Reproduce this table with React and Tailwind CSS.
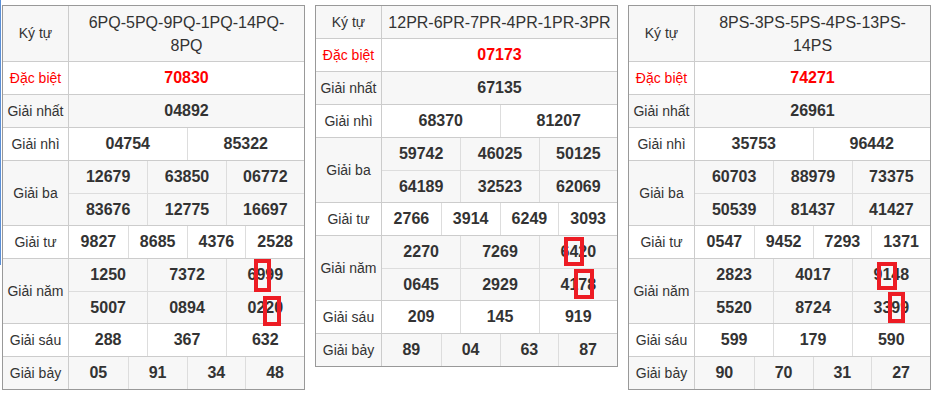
import React from 'react';

const tables = [
  {
    kyTu: '6PQ-5PQ-9PQ-1PQ-14PQ-8PQ',
    tall: true,
    db: '70830',
    g1: '04892',
    g2: ['04754', '85322'],
    g3: [['12679', '63850', '06772'], ['83676', '12775', '16697']],
    g4: ['9827', '8685', '4376', '2528'],
    g5: [['1250', '7372', '6999'], ['5007', '0894', '0220']],
    g6: ['288', '367', '632'],
    g7: ['05', '91', '34', '48'],
  },
  {
    kyTu: '12PR-6PR-7PR-4PR-1PR-3PR',
    tall: false,
    db: '07173',
    g1: '67135',
    g2: ['68370', '81207'],
    g3: [['59742', '46025', '50125'], ['64189', '32523', '62069']],
    g4: ['2766', '3914', '6249', '3093'],
    g5: [['2270', '7269', '6420'], ['0645', '2929', '4178']],
    g6: ['209', '145', '919'],
    g7: ['89', '04', '63', '87'],
  },
  {
    kyTu: '8PS-3PS-5PS-4PS-13PS-14PS',
    tall: true,
    db: '74271',
    g1: '26961',
    g2: ['35753', '96442'],
    g3: [['60703', '88979', '73375'], ['50539', '81437', '41427']],
    g4: ['0547', '9452', '7293', '1371'],
    g5: [['2823', '4017', '9148'], ['5520', '8724', '3399']],
    g6: ['599', '179', '590'],
    g7: ['90', '70', '31', '27'],
  },
];

// red marker boxes drawn over the page
const marks = [
  { left: 'left-[254px]', top: 'top-[259px]', w: 'w-[17px]', h: 'h-[33px]' },
  { left: 'left-[263px]', top: 'top-[296px]', w: 'w-[18px]', h: 'h-[30px]' },
  { left: 'left-[564px]', top: 'top-[237px]', w: 'w-[20px]', h: 'h-[29px]' },
  { left: 'left-[574px]', top: 'top-[269px]', w: 'w-[20px]', h: 'h-[30px]' },
  { left: 'left-[877px]', top: 'top-[262px]', w: 'w-[20px]', h: 'h-[28px]' },
  { left: 'left-[888px]', top: 'top-[292px]', w: 'w-[17px]', h: 'h-[31px]' },
];

const colClass = { 1: 'grid-cols-1', 2: 'grid-cols-2', 3: 'grid-cols-3', 4: 'grid-cols-4' };

const Cells = ({ items, red, lineTop }) => (
  <div className={`grid ${colClass[items.length]} h-[32px] ${lineTop ? 'border-t border-[#ddd]' : ''}`}>
    {items.map((n, i) => (
      <div
        key={i}
        className={`flex items-center justify-center text-[16px] font-bold ${i > 0 ? 'border-l border-[#ddd]' : ''} ${red ? 'text-[#ff0000]' : 'text-[#333]'}`}
      >
        {n}
      </div>
    ))}
  </div>
);

const Row = ({ label, red, grey, first, children }) => (
  <div className={`flex ${first ? '' : 'border-t border-[#ccc]'} ${grey ? 'bg-[#f7f7f7]' : 'bg-white'}`}>
    <div
      className={`w-[66px] shrink-0 border-r border-[#ccc] flex items-center justify-center text-[14px] ${red ? 'text-[#ff0000]' : 'text-[#333]'}`}
    >
      {label}
    </div>
    <div className="flex-1 flex flex-col min-w-0">{children}</div>
  </div>
);

const ResultTable = ({ t }) => (
  <div className="w-[303px] border border-[#999] shrink-0">
    <Row label="Ký tự" grey first>
      <div
        className={`flex items-center justify-center text-center px-[5px] text-[16px] leading-[23px] text-[#333] ${t.tall ? 'h-[55px]' : 'h-[32px]'}`}
      >
        {t.kyTu}
      </div>
    </Row>
    <Row label="Đặc biệt" red>
      <Cells items={[t.db]} red />
    </Row>
    <Row label="Giải nhất" grey>
      <Cells items={[t.g1]} />
    </Row>
    <Row label="Giải nhì">
      <Cells items={t.g2} />
    </Row>
    <Row label="Giải ba" grey>
      <Cells items={t.g3[0]} />
      <Cells items={t.g3[1]} lineTop />
    </Row>
    <Row label="Giải tư">
      <Cells items={t.g4} />
    </Row>
    <Row label="Giải năm" grey>
      <Cells items={t.g5[0]} />
      <Cells items={t.g5[1]} lineTop />
    </Row>
    <Row label="Giải sáu">
      <Cells items={t.g6} />
    </Row>
    <Row label="Giải bảy" grey>
      <Cells items={t.g7} />
    </Row>
  </div>
);

export default function App() {
  return (
    <div className="relative w-[936px] h-[398px] bg-white overflow-hidden font-['Liberation_Sans',Arial,sans-serif]">
      <div className="flex items-start gap-[10px] pl-[2px] pt-[5px]">
        {tables.map((t, i) => (
          <ResultTable key={i} t={t} />
        ))}
      </div>
      <div className="absolute left-0 top-0 w-[1px] h-[265px] bg-[#5b8fd6]" />
      {marks.map((m, i) => (
        <div key={i} className={`absolute ${m.left} ${m.top} ${m.w} ${m.h} border-[4px] border-[#ed1c24]`} />
      ))}
    </div>
  );
}
